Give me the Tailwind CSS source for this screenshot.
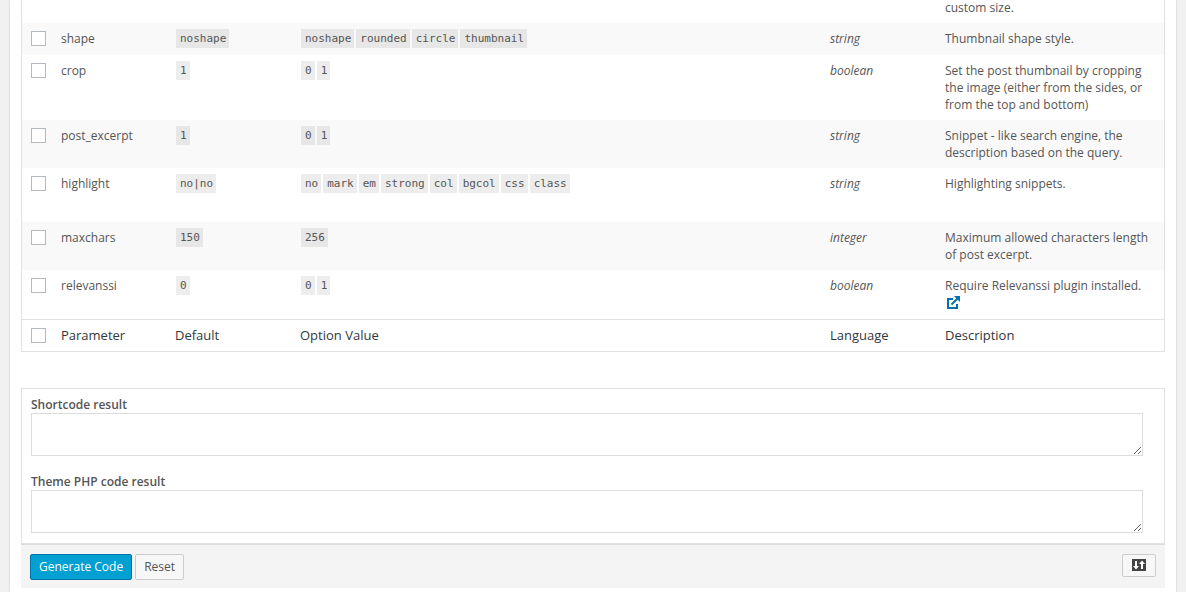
<!DOCTYPE html>
<html lang="en">
<head>
<meta charset="utf-8">
<title>Shortcode generator</title>
<script src="https://cdn.jsdelivr.net/npm/@tailwindcss/browser@4"></script>
</head>
<body class="bg-[#f1f1f1] px-[10px] font-['Open_Sans',sans-serif] text-xs leading-[17px] text-[#555]">
<main class="min-h-screen overflow-hidden bg-white px-[11px] pb-1 shadow-[0_0_2px_rgba(0,0,0,0.2)]">
  <form>
  <div class="-mt-px border-x border-b border-[#e1e1e1]">
    <table class="w-full table-fixed border-collapse text-left [&_code]:mr-[2px] [&_code]:inline-block [&_code]:bg-black/7 [&_code]:pr-[3px] [&_code]:pl-1 [&_code]:font-['DejaVu_Sans_Mono',monospace] [&_code]:text-[11px] [&_code]:leading-[19px] [&_input]:mt-px [&_input]:block [&_input]:size-[15px] [&_input]:appearance-none [&_input]:border [&_input]:border-[#b4b9be] [&_input]:bg-white [&_td]:px-2 [&_td]:align-top [&_tbody_td]:pt-[7px] [&_td:first-child]:pl-[9px] [&_td:first-child]:pr-0 [&_tbody_td:nth-child(3)]:pt-[6px] [&_tbody_td:nth-child(4)]:pt-[6px] [&_tbody_td:nth-child(3)]:pl-[9px] [&_tbody_td:nth-child(4)]:pl-[9px] [&_td:nth-child(5)]:italic">
      <colgroup>
        <col class="w-[31px]"><col class="w-[114px]"><col class="w-[125px]"><col><col class="w-[115px]"><col class="w-[227px]">
      </colgroup>
      <tbody>
        <tr class="h-6"><td colspan="5"></td><td><div class="-mt-[7px]">custom size.</div></td></tr>
        <tr class="h-8 bg-[#f9f9f9]">
          <td><input type="checkbox" aria-label="shape"></td><td>shape</td>
          <td><code>noshape</code></td>
          <td><code>noshape</code><code>rounded</code><code>circle</code><code>thumbnail</code></td>
          <td>string</td><td>Thumbnail shape style.</td>
        </tr>
        <tr class="h-[65px]">
          <td><input type="checkbox" aria-label="crop"></td><td>crop</td>
          <td><code>1</code></td><td><code>0</code><code>1</code></td>
          <td>boolean</td><td>Set the post thumbnail by cropping the image (either from the sides, or from the top and bottom)</td>
        </tr>
        <tr class="h-12 bg-[#f9f9f9]">
          <td><input type="checkbox" aria-label="post_excerpt"></td><td>post_excerpt</td>
          <td><code>1</code></td><td><code>0</code><code>1</code></td>
          <td>string</td><td>Snippet - like search engine, the description based on the query.</td>
        </tr>
        <tr class="h-[54px]">
          <td><input type="checkbox" aria-label="highlight"></td><td>highlight</td>
          <td><code>no|no</code></td>
          <td><code>no</code><code>mark</code><code>em</code><code>strong</code><code>col</code><code>bgcol</code><code>css</code><code>class</code></td>
          <td>string</td><td>Highlighting snippets.</td>
        </tr>
        <tr class="h-12 bg-[#f9f9f9]">
          <td><input type="checkbox" aria-label="maxchars"></td><td>maxchars</td>
          <td><code>150</code></td><td><code>256</code></td>
          <td>integer</td><td>Maximum allowed characters length of post excerpt.</td>
        </tr>
        <tr class="h-[49px]">
          <td><input type="checkbox" aria-label="relevanssi"></td><td>relevanssi</td>
          <td><code>0</code></td><td><code>0</code><code>1</code></td>
          <td>boolean</td>
          <td>Require Relevanssi plugin installed.
            <a href="#" aria-label="Open plugin page" class="ml-[2px] block w-[14px] pt-[2px] text-[#0073aa]">
              <svg class="block size-[14px]" viewBox="0 0 14 14" fill="none" stroke="currentColor" stroke-width="2"><path d="M6 3H1v9h9V8"/><path d="M4.500 8.500 10.500 2.500"/><path d="M7 0h6v6l-2-2-2-2z" fill="currentColor" stroke="none"/></svg>
            </a>
          </td>
        </tr>
      </tbody>
      <tfoot class="text-[13px] text-[#32373c]">
        <tr class="h-8 border-t border-[#e1e1e1] [&_th]:px-2 [&_th]:font-normal">
          <td class="pt-[7px]"><input type="checkbox" aria-label="Select all"></td>
          <th scope="col">Parameter</th><th scope="col">Default</th><th scope="col">Option Value</th><th scope="col">Language</th><th scope="col">Description</th>
        </tr>
      </tfoot>
    </table>
  </div>

  <section class="mt-9 border border-[#e1e1e1] pt-2 pr-[21px] pb-[10px] pl-[9px]">
    <label for="shortcode" class="block leading-4 font-semibold">Shortcode result</label>
    <textarea id="shortcode" class="block h-[43px] w-full border border-[#ddd] bg-white"></textarea>
    <label for="php" class="mt-[18px] block leading-4 font-semibold">Theme PHP code result</label>
    <textarea id="php" class="block h-[43px] w-full border border-[#ddd] bg-white"></textarea>
  </section>
  <footer class="flex items-start gap-[3px] border-t border-[#ddd] bg-[#f4f4f4] px-[9px] pt-[9px] pb-2">
    <button type="button" class="h-[26px] rounded-[2px] border border-[#0073aa] bg-[#00a0d2] px-2 text-xs text-white">Generate Code</button>
    <button type="reset" class="h-[26px] rounded-[2px] border border-[#ccc] bg-[#f7f7f7] px-2 text-xs">Reset</button>
    <button type="button" aria-label="Toggle layout" class="ml-auto flex h-[23px] w-[34px] items-center justify-center rounded-[2px] border border-[#ccc] bg-[#f7f7f7] pb-[2px]">
      <svg class="size-[14px]" viewBox="0 0 14 14"><path fill="#444" d="M0 1h14v12H0z"/><path fill="none" stroke="#fff" stroke-width="2" d="M4 3v6M10 11V5"/><path fill="#fff" d="M1 8h6l-3 3.500zM7 6h6l-3-3.500z"/></svg>
    </button>
  </footer>
  </form>
</main>
</body>
</html>
